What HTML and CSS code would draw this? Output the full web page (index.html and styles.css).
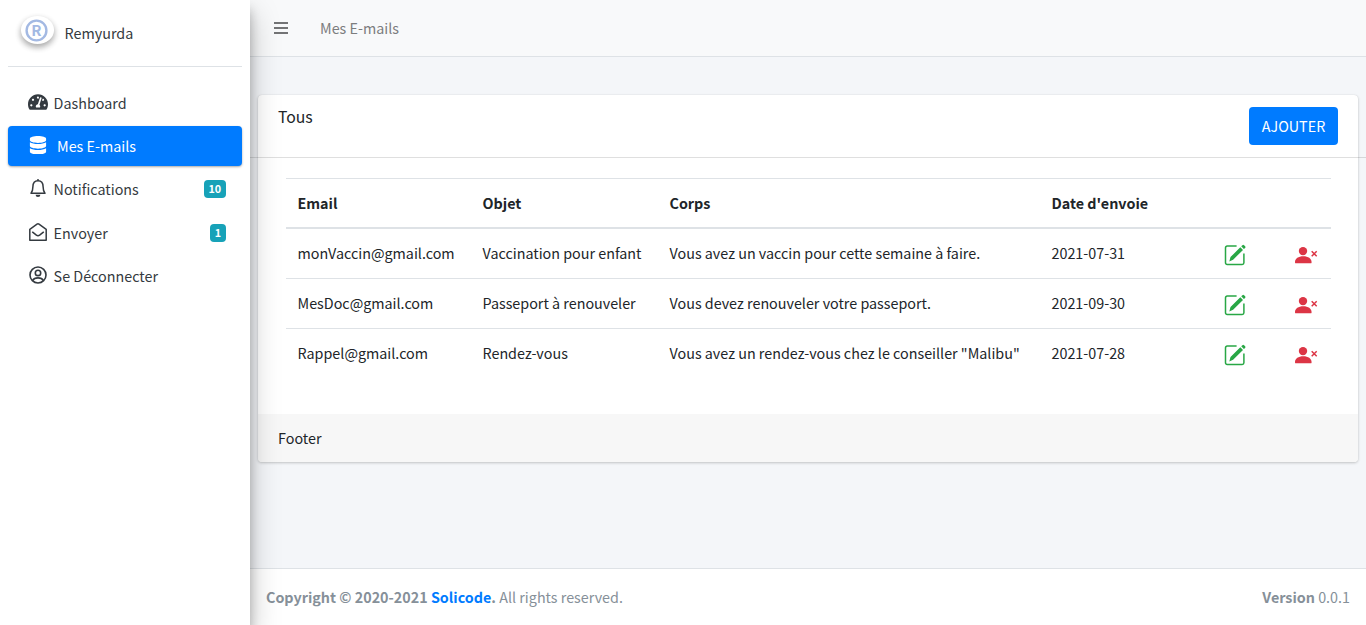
FILE: index.html
```html
<!DOCTYPE html>
<html lang="fr">
<head>
<meta charset="utf-8">
<title>Mes E-mails</title>
<link rel="stylesheet" href="styles.css">
</head>
<body>
<svg class="defs" width="0" height="0">
  <symbol id="edit" viewBox="0 0 22 22">
    <path d="M12.6 2.1H3.2a1.7 1.7 0 0 0-1.7 1.7v15a1.7 1.7 0 0 0 1.7 1.7h15a1.7 1.7 0 0 0 1.7-1.7V9.6" fill="none" stroke="currentColor" stroke-width="1.5"/>
    <path d="M16.3 3.2l2.7 2.7L9.1 15.7 5.3 17.4l1.2-4.3zM17.2 2.3l1.2-1.1a1.2 1.2 0 0 1 1.7 0l1 1a1.2 1.2 0 0 1 0 1.7L19.9 5z" fill="currentColor"/>
  </symbol>
  <symbol id="remove" viewBox="0 0 24 18">
    <circle cx="9" cy="5.1" r="4.2" fill="currentColor"/>
    <path d="M1 16.2c0-3.7 3.4-5.9 8.3-5.9s8.3 2.200 8.300 5.900c0 .9-.4 1.100-1.100 1.100H2.100c-.7 0-1.100-.2-1.100-1.100z" fill="currentColor"/>
    <path d="M17.700 5.300l5 5M22.700 5.300l-5 5" stroke="currentColor" stroke-width="1.500"/>
  </symbol>
</svg>
<div class="app">
  <aside class="sidebar">
    <div class="user">
      <span class="avatar"><svg width="23" height="23" viewBox="0 0 23 23"><circle cx="11.500" cy="11.500" r="9.900" fill="none" stroke="#a3b9e3" stroke-width="2.400"/><text class="avatar-letter" x="11.300" y="16.800" text-anchor="middle">R</text></svg></span>
      <span class="user-name">Remyurda</span>
    </div>
    <nav class="nav">
      <a class="nav-link">
        <svg class="icon" viewBox="0 0 576 512" width="20" height="18"><path fill="currentColor" d="M288 32C128.94 32 0 160.94 0 320c0 52.8 14.25 102.26 39.06 144.8 5.61 9.62 16.3 15.2 27.44 15.2h443c11.14 0 21.83-5.58 27.44-15.2C561.75 422.26 576 372.8 576 320c0-159.06-128.94-288-288-288zm0 64c14.71 0 26.58 10.13 30.32 23.65-1.11 2.26-2.64 4.23-3.45 6.67l-9.22 27.67c-5.13 3.49-10.97 6.01-17.64 6.01-17.67 0-32-14.33-32-32S270.33 96 288 96zM96 384c-17.67 0-32-14.33-32-32s14.33-32 32-32 32 14.33 32 32-14.33 32-32 32zm48-160c-17.67 0-32-14.33-32-32s14.33-32 32-32 32 14.33 32 32-14.33 32-32 32zm246.77-72.41l-61.33 184C343.13 347.33 352 364.54 352 384c0 11.72-3.38 22.55-8.88 32H232.88c-5.5-9.45-8.88-20.28-8.88-32 0-33.94 26.5-61.43 59.9-63.59l61.34-184.01c4.17-12.56 17.73-19.45 30.36-15.17 12.57 4.19 19.35 17.79 15.17 30.36zm14.66 57.2l15.52-46.55c3.47-1.29 7.13-2.23 11.05-2.23 17.67 0 32 14.33 32 32s-14.33 32-32 32c-11.38-.01-20.89-6.28-26.57-15.22zM480 384c-17.67 0-32-14.33-32-32s14.33-32 32-32 32 14.33 32 32-14.33 32-32 32z"/></svg>
        <span>Dashboard</span>
      </a>
      <a class="nav-link active">
        <svg class="icon" viewBox="0 0 448 512" width="20" height="18.500"><path fill="currentColor" d="M448 73.143v45.714C448 159.143 347.667 192 224 192S0 159.143 0 118.857V73.143C0 32.857 100.333 0 224 0s224 32.857 224 73.143zM448 176v102.857C448 319.143 347.667 352 224 352S0 319.143 0 278.857V176c48.125 33.143 136.208 48.572 224 48.572S399.874 209.143 448 176zm0 160v102.857C448 479.143 347.667 512 224 512S0 479.143 0 438.857V336c48.125 33.143 136.208 48.572 224 48.572S399.874 369.143 448 336z"/></svg>
        <span>Mes E-mails</span>
      </a>
      <a class="nav-link">
        <svg class="icon" viewBox="0 0 20 20" width="20" height="20"><path d="M3 15.200C4.600 13.500 4.900 12 4.900 8.800 4.900 5 6.800 2.700 10 2.700s5.100 2.300 5.100 6.100c0 3.200.3 4.700 1.900 6.400z" fill="none" stroke="currentColor" stroke-width="1.500" stroke-linejoin="round"/><path d="M8.800 2.600a1.200 1.500 0 0 1 2.400 0zM7.600 16.800h4.800a2.400 2.200 0 0 1-4.800 0z" fill="currentColor"/></svg>
        <span>Notifications</span><b class="badge">10</b>
      </a>
      <a class="nav-link">
        <svg class="icon" viewBox="0 0 20 20" width="20" height="20"><path d="M1.800 7.300L9 2.200q1-.7 2 0l7.200 5.100v10.900H1.800zM4.600 10.200l3.800 3q1.600 1.200 3.200 0l3.800-3" fill="none" stroke="currentColor" stroke-width="1.500" stroke-linejoin="round" stroke-linecap="round"/></svg>
        <span>Envoyer</span><b class="badge">1</b>
      </a>
      <a class="nav-link">
        <svg class="icon" viewBox="0 0 20 20" width="20" height="20"><g fill="none" stroke="currentColor" stroke-width="1.600"><circle cx="10" cy="10" r="8"/><circle cx="10" cy="7.900" r="2.700"/><path d="M4.600 15.700c1-2 3-2.800 5.400-2.800s4.400.8 5.400 2.800"/></g></svg>
        <span>Se Déconnecter</span>
      </a>
    </nav>
  </aside>
  <div class="page">
    <header class="topbar">
      <svg width="14" height="12" viewBox="0 0 14 12"><path d="M0 1h14M0 6h14M0 11h14" stroke="#737475" stroke-width="2.200"/></svg>
      <span>Mes E-mails</span>
    </header>
    <main class="content">
      <section class="card">
        <div class="card-header"><h3 class="card-title">Tous</h3><button class="btn">AJOUTER</button></div>
        <div class="card-body">
          <table class="table">
            <colgroup><col class="c-mail"><col class="c-obj"><col class="c-body"><col class="c-date"><col class="c-edit"><col></colgroup>
            <thead><tr><th>Email</th><th>Objet</th><th>Corps</th><th>Date d'envoie</th><th></th><th></th></tr></thead>
            <tbody>
              <tr><td>monVaccin@gmail.com</td><td>Vaccination pour enfant</td><td>Vous avez un vaccin pour cette semaine à faire.</td><td>2021-07-31</td><td><svg class="edit"><use href="#edit"/></svg></td><td><svg class="remove"><use href="#remove"/></svg></td></tr>
              <tr><td>MesDoc@gmail.com</td><td>Passeport à renouveler</td><td>Vous devez renouveler votre passeport.</td><td>2021-09-30</td><td><svg class="edit"><use href="#edit"/></svg></td><td><svg class="remove"><use href="#remove"/></svg></td></tr>
              <tr><td>Rappel@gmail.com</td><td>Rendez-vous</td><td>Vous avez un rendez-vous chez le conseiller "Malibu"</td><td>2021-07-28</td><td><svg class="edit"><use href="#edit"/></svg></td><td><svg class="remove"><use href="#remove"/></svg></td></tr>
            </tbody>
          </table>
        </div>
        <div class="card-footer">Footer</div>
      </section>
    </main>
    <footer class="footer">
      <div><strong>Copyright © 2020-2021 <a class="brand">Solicode</a>.</strong> All rights reserved.</div>
      <div><strong>Version</strong> 0.0.1</div>
    </footer>
  </div>
</div>
</body>
</html>
```
FILE: styles.css
```css
* { box-sizing: border-box; }
body {
  margin: 0;
  font: 14.33px/24px "Noto Sans CJK SC", "Noto Sans", sans-serif;
  color: #212529;
  background: #f4f6f9;
}
.defs { display: none; }
.app { display: flex; height: 625px; overflow: hidden; }
.sidebar {
  width: 250px;
  flex: none;
  padding: 0 8px;
  background: #fff;
  color: #343a40;
  z-index: 1;
  box-shadow: 0 14px 28px rgba(0,0,0,.25), 0 10px 10px rgba(0,0,0,.22);
}
.user {
  display: flex;
  height: 67px;
  padding: 16px 0 0 12.6px;
  border-bottom: 1px solid #dee2e6;
}
.avatar {
  display: flex;
  width: 33.6px;
  height: 28px;
  padding: 3px 0 0 4px;
  border-radius: 50%;
  background: #fff;
  box-shadow: 0 3px 6px rgba(0,0,0,.16), 0 3px 6px rgba(0,0,0,.23);
}
.avatar-letter { font: bold 15px "Noto Sans CJK SC", sans-serif; fill: #a3b9e3; }
.user-name { margin: 5px 0 0 10.4px; }
.nav { display: flex; flex-direction: column; gap: 3.2px; padding-top: 16px; }
.nav-link {
  display: flex;
  align-items: center;
  height: 40px;
  padding: 0 16px 0 20px;
  border-radius: 4px;
}
.nav-link .icon { flex: none; margin: -2px 5.6px 0 0; }
.nav-link.active {
  color: #fff;
  background: #007bff;
  box-shadow: 0 1px 3px rgba(0,0,0,.12), 0 1px 2px rgba(0,0,0,.24);
}
.nav-link.active .icon { margin-right: 9px; }
.badge {
  margin-left: auto;
  padding: 0 4.8px;
  border-radius: 4px;
  background: #17a2b8;
  color: #fff;
  font-size: 10.75px;
  line-height: 18px;
}
.page { flex: 1; min-width: 0; display: flex; flex-direction: column; }
.topbar {
  display: flex;
  align-items: center;
  gap: 32px;
  height: 57px;
  padding-left: 24px;
  background: #f8f9fa;
  border-bottom: 1px solid #dee2e6;
  color: #7c7d7e;
}
.content { flex: 1; padding: 38px 8px 0; }
.card {
  height: 367px;
  display: flex;
  flex-direction: column;
  border-radius: 4px;
  background: #fff;
  box-shadow: 0 0 1px rgba(0,0,0,.125), 0 1px 3px rgba(0,0,0,.2);
}
.card-header {
  display: flex;
  justify-content: space-between;
  align-items: flex-start;
  height: 63px;
  margin: 0 -8px;
  padding: 12px 28px;
  border-bottom: 1px solid rgba(0,0,0,.125);
}
.card-title { margin: -1px 0 0; font-size: 15.76px; font-weight: 400; line-height: 22px; }
.btn {
  width: 89px;
  height: 38px;
  padding: 0;
  border: 0;
  border-radius: 4px;
  background: #007bff;
  color: #fff;
  font: inherit;
}
.card-body { flex: 1; padding: 20px 27px 0 28px; }
.table { width: 100%; table-layout: fixed; border-collapse: separate; border-spacing: 0; }
.c-mail { width: 185px; }
.c-obj { width: 187px; }
.c-body { width: 382px; }
.c-date { width: 172px; }
.c-edit { width: 70.5px; }
.table th, .table td {
  height: 50px;
  padding: 0 11.5px;
  border-top: 1px solid #dee2e6;
  text-align: left;
  white-space: nowrap;
}
.table thead th { height: 51px; border-bottom: 2px solid #dee2e6; }
.table tbody tr:first-child td { height: 49px; border-top: 0; }
.table td { padding-bottom: 1px; }
.table svg { display: block; margin-top: 3px; }
.edit { width: 22px; height: 22px; color: #28a745; }
.remove { width: 24px; height: 18px; color: #dc3545; }
.card-footer {
  height: 48px;
  padding: 12px 20px;
  border-radius: 0 0 4px 4px;
  background: #f7f7f7;
}
.footer {
  display: flex;
  justify-content: space-between;
  height: 57px;
  padding: 16px;
  border-top: 1px solid #dee2e6;
  background: #fff;
  color: #869099;
}
.brand { color: #007bff; }
```
